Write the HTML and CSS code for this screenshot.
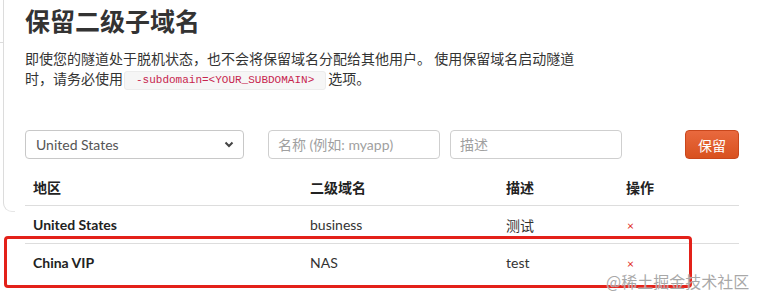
FILE: index.html
```html
<!DOCTYPE html>
<html lang="zh-CN">
<head>
<meta charset="utf-8">
<title>保留二级子域名</title>
<link rel="stylesheet" href="styles.css">
</head>
<body>
<div class="page">
  <div class="panel-edge"></div>
  <div class="panel-tick"></div>
  <h1 class="title">保留二级子域名</h1>
  <p class="intro">即使您的隧道处于脱机状态，也不会将保留域名分配给其他用户。 使用保留域名启动隧道时，请务必使用<code class="code">-subdomain=&lt;YOUR_SUBDOMAIN&gt;</code>选项。</p>

  <form class="form-row">
    <div class="select">
      <span>United States</span>
      <svg class="chev" width="10" height="7" viewBox="0 0 10 7"><path d="M1.5 1.5 L5 5 L8.5 1.5" fill="none" stroke="#444" stroke-width="2"/></svg>
    </div>
    <input class="input name" type="text" placeholder="名称 (例如: myapp)">
    <input class="input desc" type="text" placeholder="描述">
    <button class="btn" type="button">保留</button>
  </form>

  <div class="table">
    <div class="row head">
      <div class="cell">地区</div>
      <div class="cell">二级域名</div>
      <div class="cell">描述</div>
      <div class="cell">操作</div>
    </div>
    <div class="row">
      <div class="cell strong">United States</div>
      <div class="cell">business</div>
      <div class="cell">测试</div>
      <div class="cell"><span class="del">×</span></div>
    </div>
    <div class="row">
      <div class="cell strong">China VIP</div>
      <div class="cell">NAS</div>
      <div class="cell">test</div>
      <div class="cell"><span class="del">×</span></div>
    </div>
  </div>

  <div class="highlight"></div>
  <div class="watermark">@稀土掘金技术社区</div>
</div>
</body>
</html>
```

FILE: styles.css
```css
* { box-sizing: border-box; }
html, body { margin: 0; padding: 0; background: #fff; }
body {
  font-family: Lato, "Noto Sans CJK SC", sans-serif;
  font-size: 14px;
  color: #333;
  width: 760px;
  height: 303px;
  overflow: hidden;
}
.page {
  position: relative;
  padding-left: 25px;
  width: 760px;
  height: 303px;
}
.panel-edge {
  position: absolute;
  left: 3px;
  top: -10px;
  width: 12px;
  height: 222px;
  border-left: 1px solid #dcdcdc;
  border-bottom: 1px solid #e6e6e6;
  border-bottom-left-radius: 9px;
}
.panel-tick {
  position: absolute;
  left: 0;
  top: 42px;
  width: 3px;
  height: 1px;
  background: #dcdcdc;
}
.title {
  margin: 0;
  padding-top: 5px;
  font-family: "Noto Sans CJK SC", sans-serif;
  font-size: 25px;
  line-height: 30px;
  font-weight: 700;
  color: #333;
}
.intro {
  margin: 13px 0 0;
  width: 556px;
  font-family: "Noto Sans CJK SC", sans-serif;
  font-size: 14px;
  line-height: 20px;
  color: #333;
}
.code {
  display: inline-block;
  margin: 0 2px 0 1px;
  padding: 0 11px;
  height: 19px;
  line-height: 17px;
  font-family: "Liberation Mono", monospace;
  font-size: 11px;
  color: #c7254e;
  background: #f6f6f6;
  border: 1px solid #ececec;
  border-radius: 3px;
  vertical-align: 1px;
}
.form-row {
  display: flex;
  align-items: center;
  margin: 40px 0 0;
  width: 714px;
  height: 29px;
}
.select {
  display: flex;
  align-items: center;
  justify-content: space-between;
  width: 219px;
  height: 29px;
  padding: 0 9px 0 10px;
  border: 1px solid #c8c8c8;
  border-radius: 4px;
  color: #555;
  font-size: 14px;
}
.input {
  height: 29px;
  width: 172px;
  padding: 0 9px;
  border: 1px solid #cfcfcf;
  border-radius: 4px;
  font-family: Lato, "Noto Sans CJK SC", sans-serif;
  font-size: 14px;
  color: #555;
  outline: none;
}
.input::placeholder { color: #a0a0a0; }
.name { margin-left: 24px; }
.desc { margin-left: 10px; }
.btn {
  margin-left: auto;
  width: 54px;
  height: 29px;
  border: 1px solid #c9471c;
  border-radius: 4px;
  background: linear-gradient(#e9693e, #d8511f);
  color: #fff;
  font-family: "Noto Sans CJK SC", sans-serif;
  font-size: 14px;
  padding: 0;
}
.table {
  margin-top: 10px;
  width: 714px;
}
.row {
  display: grid;
  grid-template-columns: 277px 196px 120px 121px;
  height: 37px;
  align-items: center;
  border-top: 1px solid #dddddd;
}
.row.head { border-top: none; height: 37px; border-bottom: 1px solid #dddddd; }
.row.head + .row { border-top: none; }
.cell {
  padding: 0 8px;
  font-size: 14px;
  color: #333;
}
.head .cell {
  font-family: "Noto Sans CJK SC", sans-serif;
  font-weight: 700;
  color: #222;
}
.strong { font-weight: 700; color: #222; }
.del {
  display: inline-block;
  color: #e02a1a;
  font-size: 12px;
  margin-left: 1px;
}
.highlight {
  position: absolute;
  left: 4px;
  top: 236px;
  width: 688px;
  height: 52px;
  border: 3px solid #e32119;
  border-radius: 4px;
  pointer-events: none;
}
.watermark {
  position: absolute;
  left: 606px;
  top: 269px;
  font-family: "Noto Sans CJK SC", sans-serif;
  font-size: 16px;
  line-height: 24px;
  color: rgba(140, 140, 140, 0.75);
  text-shadow: 0 0 1px #fff;
}
```
